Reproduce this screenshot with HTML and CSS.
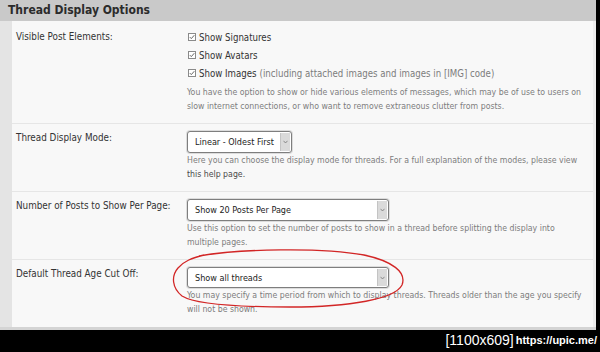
FILE: index.html
```html
<!DOCTYPE html>
<html lang="en">
<head>
  <meta charset="UTF-8">
  <title>Thread Display Options</title>
  <link rel="stylesheet" href="styles.css">
</head>
<body>
  <div class="shot">
    <div class="panel">
      <h2 class="panel-head">Thread Display Options</h2>
      <div class="panel-body">
        <!-- Visible elements -->
        <div class="opt-row">
          <div class="opt-label opt-label-check">Visible Post Elements:</div>
          <div class="opt-field">
            <label class="check"><svg class="check-box" width="8" height="8" viewBox="0 0 8 8"><rect x="0.5" y="0.5" width="7" height="7" fill="#fff" stroke="#8a8a8a"/><path d="M1.8 4.1 L3.3 5.6 L6.3 2.2" stroke="#555" stroke-width="0.9" fill="none"/></svg>Show Signatures</label>
            <label class="check"><svg class="check-box" width="8" height="8" viewBox="0 0 8 8"><rect x="0.5" y="0.5" width="7" height="7" fill="#fff" stroke="#8a8a8a"/><path d="M1.8 4.1 L3.3 5.6 L6.3 2.2" stroke="#555" stroke-width="0.9" fill="none"/></svg>Show Avatars</label>
            <label class="check"><svg class="check-box" width="8" height="8" viewBox="0 0 8 8"><rect x="0.5" y="0.5" width="7" height="7" fill="#fff" stroke="#8a8a8a"/><path d="M1.8 4.1 L3.3 5.6 L6.3 2.2" stroke="#555" stroke-width="0.9" fill="none"/></svg>Show Images <span class="check-note">(including attached images and images in [IMG] code)</span></label>
            <p class="opt-help opt-help-check">You have the option to show or hide various elements of messages, which may be of use to users on<br>slow internet connections, or who want to remove extraneous clutter from posts.</p>
          </div>
        </div>
        <!-- Display mode -->
        <div class="opt-row">
          <div class="opt-label">Thread Display Mode:</div>
          <div class="opt-field">
            <div class="select select-short"><span class="select-value">Linear - Oldest First</span><span class="select-arrow"><svg width="5" height="4" viewBox="0 0 5 4"><path d="M0.5 0.8 L2.5 3 L4.5 0.8" stroke="#777" stroke-width="0.8" fill="none"/></svg></span></div>
            <p class="opt-help">Here you can choose the display mode for threads. For a full explanation of the modes, please view<br><a class="help-link" href="#">this help page.</a></p>
          </div>
        </div>
        <!-- Posts per page -->
        <div class="opt-row">
          <div class="opt-label">Number of Posts to Show Per Page:</div>
          <div class="opt-field">
            <div class="select"><span class="select-value">Show 20 Posts Per Page</span><span class="select-arrow"><svg width="5" height="4" viewBox="0 0 5 4"><path d="M0.5 0.8 L2.5 3 L4.5 0.8" stroke="#777" stroke-width="0.8" fill="none"/></svg></span></div>
            <p class="opt-help">Use this option to set the number of posts to show in a thread before splitting the display into<br>multiple pages.</p>
          </div>
        </div>
        <!-- Age cut off -->
        <div class="opt-row opt-row-last">
          <div class="opt-label">Default Thread Age Cut Off:</div>
          <div class="opt-field">
            <div class="select select-low"><span class="select-value">Show all threads</span><span class="select-arrow"><svg width="5" height="4" viewBox="0 0 5 4"><path d="M0.5 0.8 L2.5 3 L4.5 0.8" stroke="#777" stroke-width="0.8" fill="none"/></svg></span></div>
            <p class="opt-help">You may specify a time period from which to display threads. Threads older than the age you specify<br>will not be shown.</p>
          </div>
        </div>
      </div>
    </div>
    <div class="stamp"><span class="stamp-size">[1100x609]</span><span class="stamp-url">https://upic.me/</span></div>
    <!-- hand-drawn marker ring -->
    <svg class="scribble" width="600" height="352" viewBox="0 0 600 352">
      <path d="M199 256 C240 249 320 247 364 255 C392 261 407 272 402 285 C395 299 350 307 290 307 C240 307 195 304 182 296 C172 288 171 276 178 268 C184 261 192 258 204 255" stroke="#d22626" stroke-width="1.3" fill="none"/>
    </svg>
  </div>
</body>
</html>
```

FILE: styles.css
```css
body {
  margin: 0;
  background: #000;
  font-family: "DejaVu Sans Condensed", "Liberation Sans", sans-serif;
}
.shot {
  position: relative;
  width: 600px;
  height: 352px;
  background: #000;
  overflow: hidden;
}
.panel {
  width: 596px;
  border-bottom: 3px solid #d4d4d4;
}
.panel-head {
  margin: 0;
  height: 21px;
  line-height: 21px;
  padding-left: 8px;
  background: #c9c9c9;
  color: #2b2b2b;
  font-size: 12px;
  font-weight: bold;
}
.panel-body {
  background: #f8f8f8;
  border-left: 12px solid #e4e4e4;
  border-right: 3px solid #ededed;
}
.opt-row {
  display: grid;
  grid-template-columns: 171px 1fr;
  padding: 7px 0 10px 4px;
  border-bottom: 1px solid #e6e6e6;
}
.opt-row-last {
  border-bottom: none;
  padding-bottom: 11px;
}
.opt-label {
  color: #333;
  font-size: 9.8px;
  line-height: 14px;
}
.opt-label-check {
  line-height: 18px;
}
.opt-field {
  display: flex;
  flex-direction: column;
  align-items: flex-start;
}
.check {
  display: flex;
  align-items: center;
  height: 18px;
  color: #333;
  font-size: 9.6px;
}
.check-box {
  margin: 0 3px 0 1px;
}
.check-note {
  color: #7c7c7c;
  margin-left: 3px;
}
.opt-help {
  margin: 0;
  color: #7d7d7d;
  font-size: 8.7px;
  line-height: 14px;
}
.opt-help-check {
  margin-top: 3px;
}
.help-link {
  color: #4a4a4a;
  text-decoration: none;
}
.select {
  display: flex;
  align-items: stretch;
  box-sizing: border-box;
  width: 202px;
  height: 22px;
  background: #fff;
  border: 1px solid #7e7e7e;
  border-radius: 3px;
  box-shadow: 0 0 0 1px #dcdcdc;
}
.select-short {
  width: 105px;
}
.select-low {
  height: 21px;
}
.select-value {
  flex: 1;
  display: flex;
  align-items: center;
  padding-left: 7px;
  color: #222;
  font-size: 9px;
}
.select-arrow {
  display: flex;
  align-items: center;
  justify-content: center;
  width: 9px;
  margin: 1px;
  background: #dadada;
  border-left: 1px solid #c4c4c4;
}
.stamp {
  display: flex;
  justify-content: flex-end;
  align-items: center;
  height: 20px;
  padding-right: 3px;
  color: #fff;
}
.stamp-size {
  font-family: "Liberation Sans", sans-serif;
  font-size: 14px;
  margin-right: 2px;
}
.stamp-url {
  font-family: "Liberation Sans", sans-serif;
  font-size: 11px;
  font-weight: bold;
}
.scribble {
  position: absolute;
  left: 0;
  top: 0;
  pointer-events: none;
}
```
